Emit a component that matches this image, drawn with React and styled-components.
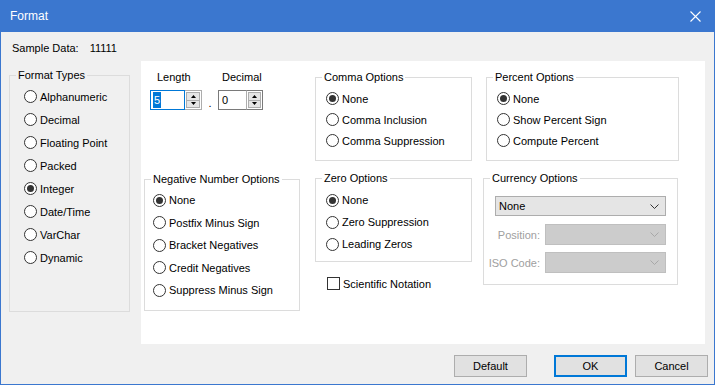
import React from 'react';
import styled, { createGlobalStyle } from 'styled-components';

const FONT = `"Segoe UI", "Liberation Sans", Arial, sans-serif`;

const Global = createGlobalStyle`
  html, body { margin: 0; padding: 0; background: #f0f0f0; }
  body { font-family: ${FONT}; font-size: 11px; color: #000; }
  * { box-sizing: border-box; }
`;

const Window = styled.div`
  width: 715px;
  height: 385px;
  display: flex;
  flex-direction: column;
  border: 1px solid #3b77cf;
  border-top: none;
  background: #f0f0f0;
`;

const TitleBar = styled.div`
  height: 32px;
  margin: 0 -1px;
  background: #3b77cf;
  color: #fff;
  display: flex;
  align-items: center;
  padding-left: 10px;
  font-size: 12px;
`;

const CloseButton = styled.div`
  margin-left: auto;
  width: 46px;
  height: 32px;
  display: flex;
  align-items: center;
  justify-content: center;
  padding-left: 7px;
`;

const SampleRow = styled.div`
  display: flex;
  height: 16px;
  line-height: 16px;
  margin: 8px 0 0 11px;
  gap: 11px;
`;

const Main = styled.div`
  display: flex;
  align-items: flex-start;
  margin-top: 5px;
`;

const Group = styled.fieldset`
  margin: 0;
  margin-left: ${p => p.$ml || 0}px;
  margin-top: ${p => p.$mt || 0}px;
  padding: 0;
  width: ${p => p.$w}px;
  height: ${p => p.$h}px;
  border: 1px solid #dcdcdc;
  min-width: 0;
`;

const Legend = styled.legend`
  margin-left: 6px;
  padding: 0 2px;
  height: 16px;
  line-height: 16px;
`;

const Options = styled.div`
  display: flex;
  flex-direction: column;
  padding-left: ${p => p.$indent}px;
  padding-top: ${p => p.$pt}px;
`;

const RadioRow = styled.label`
  display: flex;
  align-items: center;
  gap: 3px;
  height: ${p => p.$h}px;
  white-space: nowrap;
`;

const Circle = styled.span`
  width: 13px;
  height: 13px;
  border-radius: 50%;
  border: 1px solid #333;
  background: #fff;
  display: flex;
  align-items: center;
  justify-content: center;
  flex: none;
  &::after {
    content: '';
    width: 7px;
    height: 7px;
    border-radius: 50%;
    background: #333;
    display: ${p => (p.$on ? 'block' : 'none')};
  }
`;

const Panel = styled.div`
  width: 564px;
  height: 283px;
  margin-left: 11px;
  background: #fff;
  display: flex;
  padding: 8px 0 0 3px;
`;

const Column = styled.div`
  display: flex;
  flex-direction: column;
  width: ${p => p.$w}px;
  margin-left: ${p => p.$ml || 0}px;
`;

const SpinArea = styled.div`
  display: flex;
  align-items: flex-end;
  margin-left: 6px;
`;

const SpinField = styled.div`
  display: flex;
  flex-direction: column;
  gap: 5px;
`;

const SpinLabel = styled.div`
  height: 16px;
  line-height: 16px;
  padding-left: ${p => p.$pl}px;
`;

const SpinBox = styled.div`
  display: flex;
  height: 20px;
  width: ${p => p.$w}px;
`;

const SpinInput = styled.div`
  flex: 1;
  border: 1px solid ${p => (p.$focus ? '#0078d7' : '#7a7a7a')};
  border-right: ${p => (p.$focus ? '1px solid #0078d7' : 'none')};
  display: flex;
  align-items: center;
  padding-left: 2px;
`;

const Selected = styled.span`
  background: ${p => (p.$on ? '#0078d7' : 'transparent')};
  color: ${p => (p.$on ? '#fff' : '#000')};
  padding: 0 1px;
  line-height: 16px;
`;

const Spinner = styled.div`
  width: 17px;
  display: flex;
  flex-direction: column;
  border: 1px solid ${p => (p.$focus ? '#adadad' : '#7a7a7a')};
  border-left: ${p => (p.$focus ? 'none' : '1px solid #adadad')};
  background: #fff;
  padding: 1px;
`;

const SpinBtn = styled.div`
  flex: 1;
  background: #e5e5e5;
  border: 1px solid #adadad;
  margin-top: ${p => (p.$down ? '-1px' : 0)};
  display: flex;
  align-items: center;
  justify-content: center;
`;

const Dot = styled.span`
  width: 16px;
  text-align: center;
  line-height: 14px;
`;

const CheckRow = styled.label`
  display: flex;
  align-items: center;
  gap: 3px;
  margin: 15px 0 0 12px;
  height: 13px;
`;

const Box = styled.span`
  width: 13px;
  height: 13px;
  border: 1px solid #333;
  background: #fff;
`;

const CurrencyBody = styled.div`
  display: flex;
  flex-direction: column;
  padding-top: 10px;
`;

const Combo = styled.div`
  display: flex;
  align-items: center;
  width: ${p => p.$w}px;
  height: ${p => p.$h}px;
  margin-left: ${p => p.$ml || 0}px;
  background: ${p => (p.$disabled ? '#cccccc' : '#e5e5e5')};
  border: 1px solid ${p => (p.$disabled ? '#bfbfbf' : '#adadad')};
  padding: 0 6px 0 3px;
  justify-content: space-between;
  flex: none;
`;

const FieldRow = styled.div`
  display: flex;
  align-items: center;
  margin-top: ${p => p.$mt}px;
  gap: 5px;
`;

const FieldLabel = styled.span`
  width: 56px;
  display: flex;
  justify-content: flex-end;
  white-space: nowrap;
  color: #a0a0a0;
`;

const Footer = styled.div`
  display: flex;
  justify-content: flex-end;
  margin-top: 11px;
  padding-right: 6px;
`;

const Button = styled.button`
  width: 73px;
  height: 22px;
  margin-left: ${p => p.$ml}px;
  font-family: ${FONT};
  font-size: 11px;
  color: #000;
  background: #e1e1e1;
  border: ${p => (p.$primary ? '2px solid #0078d7' : '1px solid #adadad')};
  padding: 0;
`;

const Chevron = ({ color }) => (
  <svg width="9" height="5" viewBox="0 0 9 5">
    <path d="M0.5 0.5 L4.5 4.5 L8.5 0.5" fill="none" stroke={color} strokeWidth="1" />
  </svg>
);

const Arrow = ({ down }) => (
  <svg width="5" height="3" viewBox="0 0 5 3">
    <path d={down ? 'M0 0 H5 L2.5 3 Z' : 'M0 3 H5 L2.5 0 Z'} fill="#000" />
  </svg>
);

const Radio = ({ label, on, h }) => (
  <RadioRow $h={h}>
    <Circle $on={on} />
    {label}
  </RadioRow>
);

const RadioGroup = ({ title, items, selected, w, h, indent, pt, rowH, ml, mt }) => (
  <Group $w={w} $h={h} $ml={ml} $mt={mt}>
    <Legend>{title}</Legend>
    <Options $indent={indent} $pt={pt}>
      {items.map(it => (
        <Radio key={it} label={it} on={it === selected} h={rowH} />
      ))}
    </Options>
  </Group>
);

const Spin = ({ value, w, focus }) => (
  <SpinBox $w={w}>
    <SpinInput $focus={focus}>
      <Selected $on={focus}>{value}</Selected>
    </SpinInput>
    <Spinner $focus={focus}>
      <SpinBtn><Arrow /></SpinBtn>
      <SpinBtn $down><Arrow down /></SpinBtn>
    </Spinner>
  </SpinBox>
);

const formatTypes = ['Alphanumeric', 'Decimal', 'Floating Point', 'Packed', 'Integer', 'Date/Time', 'VarChar', 'Dynamic'];

export default function App() {
  return (
    <>
      <Global />
      <Window>
        <TitleBar>
          Format
          <CloseButton>
            <svg width="11" height="11" viewBox="0 0 11 11">
              <path d="M0.5 0.5 L10.5 10.5 M10.5 0.5 L0.5 10.5" stroke="#fff" strokeWidth="1.1" />
            </svg>
          </CloseButton>
        </TitleBar>

        <SampleRow>
          <span>Sample Data:</span>
          <span>11111</span>
        </SampleRow>

        <Main>
          <RadioGroup
            title="Format Types"
            items={formatTypes}
            selected="Integer"
            w={121} h={245} ml={8} mt={6}
            indent={14} pt={2} rowH={23}
          />
          <Panel>
            <Column $w={156}>
              <SpinArea>
                <SpinField>
                  <SpinLabel $pl={7}>Length</SpinLabel>
                  <Spin value="5" w={52} focus />
                </SpinField>
                <Dot>.</Dot>
                <SpinField>
                  <SpinLabel $pl={4}>Decimal</SpinLabel>
                  <Spin value="0" w={45} />
                </SpinField>
              </SpinArea>
              <RadioGroup
                title="Negative Number Options"
                items={['None', 'Postfix Minus Sign', 'Bracket Negatives', 'Credit Negatives', 'Suppress Minus Sign']}
                selected="None"
                w={156} h={140} mt={61}
                indent={8} pt={2} rowH={22.5}
              />
            </Column>

            <Column $w={157} $ml={15}>
              <RadioGroup
                title="Comma Options"
                items={['None', 'Comma Inclusion', 'Comma Suppression']}
                selected="None"
                w={157} h={92}
                indent={10} pt={3} rowH={21}
              />
              <RadioGroup
                title="Zero Options"
                items={['None', 'Zero Suppression', 'Leading Zeros']}
                selected="None"
                w={157} h={92} mt={9}
                indent={10} pt={3} rowH={22}
              />
              <CheckRow>
                <Box />
                Scientific Notation
              </CheckRow>
            </Column>

            <Column $w={196} $ml={11}>
              <RadioGroup
                title="Percent Options"
                items={['None', 'Show Percent Sign', 'Compute Percent']}
                selected="None"
                w={193} h={92} ml={3}
                indent={10} pt={3} rowH={21}
              />
              <Group $w={195} $h={115} $mt={9}>
                <Legend>Currency Options</Legend>
                <CurrencyBody>
                  <Combo $w={171} $h={20} $ml={11}>
                    None
                    <Chevron color="#333" />
                  </Combo>
                  <FieldRow $mt={8}>
                    <FieldLabel>Position:</FieldLabel>
                    <Combo $w={121} $h={21} $disabled>
                      <span />
                      <Chevron color="#a8a8a8" />
                    </Combo>
                  </FieldRow>
                  <FieldRow $mt={7}>
                    <FieldLabel>ISO Code:</FieldLabel>
                    <Combo $w={121} $h={21} $disabled>
                      <span />
                      <Chevron color="#a8a8a8" />
                    </Combo>
                  </FieldRow>
                </CurrencyBody>
              </Group>
            </Column>
          </Panel>
        </Main>

        <Footer>
          <Button $ml={0}>Default</Button>
          <Button $ml={27} $primary>OK</Button>
          <Button $ml={8}>Cancel</Button>
        </Footer>
      </Window>
    </>
  );
}
